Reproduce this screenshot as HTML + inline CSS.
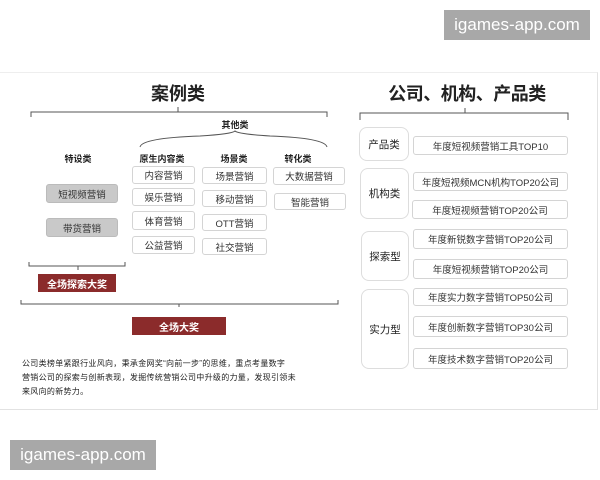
<!DOCTYPE html>
<html><head><meta charset="utf-8"><style>
body{margin:0;width:600px;height:480px;background:#fff;position:relative;overflow:hidden;font-family:"Liberation Sans","Noto Sans CJK SC",sans-serif;color:#222}
.a{position:absolute}
.card{position:absolute;left:-2px;top:72px;width:598px;height:336px;border:1px solid #e2e2e2;border-top-color:#eee;background:#fff}
.b{position:absolute;border:1px solid #d4d4d4;border-radius:3px;background:#fff;font-size:9.5px;display:flex;align-items:center;justify-content:center;box-sizing:border-box;color:#333;white-space:nowrap}
.g{background:#c9c9c9;border-color:#bbb}
.r{position:absolute;background:#8b2b2b;color:#fff;font-size:10px;font-weight:bold;display:flex;align-items:center;justify-content:center}
.l{position:absolute;border:1px solid #ddd;border-radius:8px;font-size:10.5px;display:flex;align-items:center;justify-content:center;box-sizing:border-box;color:#222}
.h{position:absolute;font-size:9px;font-weight:bold;transform:translateX(-50%);white-space:nowrap}
.wm{position:absolute;background:#a8a8a8;color:#fff;font-size:17px;display:flex;align-items:center;justify-content:center}
</style></head><body>
<div class="card"></div>
<div class="wm" style="left:444px;top:10px;width:146px;height:30px">igames-app.com</div>
<div class="wm" style="left:10px;top:440px;width:146px;height:30px">igames-app.com</div>

<div class="a" style="left:128px;top:80px;width:100px;text-align:center;font-size:18px;font-weight:bold">案例类</div>
<div class="a" style="left:367px;top:80px;width:200px;text-align:center;font-size:18px;font-weight:bold;white-space:nowrap;letter-spacing:-0.5px">公司、机构、产品类</div>

<svg class="a" style="left:0;top:0" width="600" height="480" fill="none" stroke="#555" stroke-width="1">
<path d="M31 117 V112 H327 V117 M178 112 V107"/>
<path d="M140 147 Q142 138 200 136 Q232 134 235 131 Q238 134 270 136 Q325 138 327 147"/>
<path d="M29 262 V266 H125 V262 M78 266 V270"/>
<path d="M21 300 V304 H338 V300 M179 304 V307"/>
<path d="M360 120 V113 H568 V120 M465 113 V108"/>
</svg>

<div class="h" style="left:235px;top:118px">其他类</div>
<div class="h" style="left:78px;top:152px">特设类</div>
<div class="h" style="left:162px;top:152px">原生内容类</div>
<div class="h" style="left:234px;top:152px">场景类</div>
<div class="h" style="left:298px;top:152px">转化类</div>

<div class="b g" style="left:46px;top:184px;width:72px;height:19px">短视频营销</div>
<div class="b g" style="left:46px;top:218px;width:72px;height:19px">带货营销</div>

<div class="b" style="left:132px;top:166px;width:63px;height:18px">内容营销</div>
<div class="b" style="left:132px;top:188px;width:63px;height:18px">娱乐营销</div>
<div class="b" style="left:132px;top:211px;width:63px;height:19px">体育营销</div>
<div class="b" style="left:132px;top:236px;width:63px;height:18px">公益营销</div>

<div class="b" style="left:202px;top:167px;width:65px;height:17px">场景营销</div>
<div class="b" style="left:202px;top:190px;width:65px;height:17px">移动营销</div>
<div class="b" style="left:202px;top:214px;width:65px;height:17px">OTT营销</div>
<div class="b" style="left:202px;top:238px;width:65px;height:17px">社交营销</div>

<div class="b" style="left:273px;top:167px;width:72px;height:18px">大数据营销</div>
<div class="b" style="left:274px;top:193px;width:72px;height:17px">智能营销</div>

<div class="r" style="left:38px;top:274px;width:78px;height:18px">全场探索大奖</div>
<div class="r" style="left:132px;top:317px;width:94px;height:18px">全场大奖</div>

<div class="a" style="left:22px;top:357px;font-size:8px;letter-spacing:0.3px;line-height:14px;color:#222;white-space:nowrap">公司类榜单紧跟行业风向，秉承金网奖“向前一步”的思维，重点考量数字<br>营销公司的探索与创新表现，发掘传统营销公司中升级的力量，发现引领未<br>来风向的新势力。</div>

<div class="l" style="left:359px;top:127px;width:50px;height:34px">产品类</div>
<div class="l" style="left:360px;top:168px;width:49px;height:51px">机构类</div>
<div class="l" style="left:361px;top:231px;width:48px;height:50px">探索型</div>
<div class="l" style="left:361px;top:289px;width:48px;height:80px">实力型</div>

<div class="b" style="left:413px;top:136px;width:155px;height:19px">年度短视频营销工具TOP10</div>
<div class="b" style="left:413px;top:172px;width:155px;height:19px">年度短视频MCN机构TOP20公司</div>
<div class="b" style="left:412px;top:200px;width:156px;height:19px">年度短视频营销TOP20公司</div>
<div class="b" style="left:413px;top:229px;width:155px;height:20px">年度新锐数字营销TOP20公司</div>
<div class="b" style="left:413px;top:259px;width:155px;height:20px">年度短视频营销TOP20公司</div>
<div class="b" style="left:413px;top:288px;width:155px;height:18px">年度实力数字营销TOP50公司</div>
<div class="b" style="left:413px;top:316px;width:155px;height:21px">年度创新数字营销TOP30公司</div>
<div class="b" style="left:413px;top:348px;width:155px;height:21px">年度技术数字营销TOP20公司</div>
</body></html>
